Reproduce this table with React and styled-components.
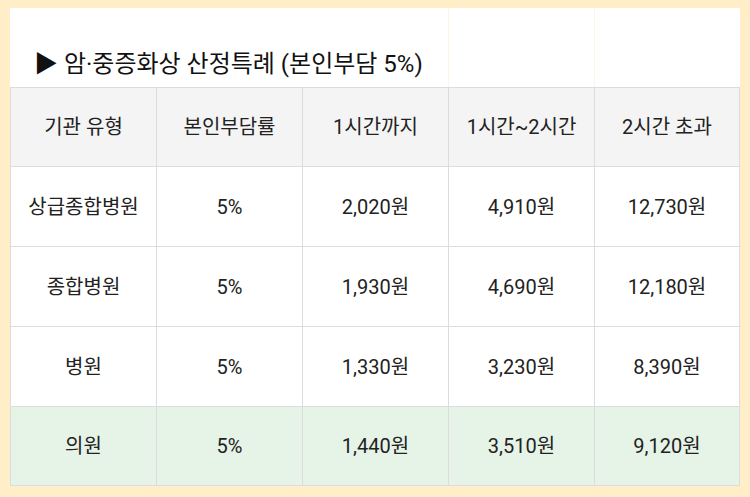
import React from "react";
import styled, { createGlobalStyle } from "styled-components";

const GlobalStyle = createGlobalStyle`
  html, body {
    margin: 0;
    padding: 0;
    background: #ffeec8;
  }
  body {
    font-family: Roboto, "Noto Sans CJK KR", sans-serif;
    color: #222;
  }
`;

const columns = ["기관 유형", "본인부담률", "1시간까지", "1시간~2시간", "2시간 초과"];

const rows = [
  ["상급종합병원", "5%", "2,020원", "4,910원", "12,730원"],
  ["종합병원", "5%", "1,930원", "4,690원", "12,180원"],
  ["병원", "5%", "1,330원", "3,230원", "8,390원"],
  ["의원", "5%", "1,440원", "3,510원", "9,120원", true],
];

const App = () => {
  return (
    <>
      <GlobalStyle />
      <Page>
        <Table>
          <TitleCell>
            <Title>▶ 암·중증화상 산정특례 (본인부담 5%)</Title>
          </TitleCell>
          <BlankCell />
          <BlankCell />
          {columns.map((c) => (
            <Cell key={c} $head>
              {c}
            </Cell>
          ))}
          {rows.map((r, ri) =>
            r.slice(0, 5).map((v, i) => (
              <Cell key={r[0] + i} $green={r[5]} $last={ri === rows.length - 1}>
                {v}
              </Cell>
            ))
          )}
        </Table>
      </Page>
    </>
  );
};

export default App;

const Page = styled.div`
  padding: 8px 10px 12px;
`;

const Table = styled.div`
  width: 730px;
  display: grid;
  grid-template-columns: repeat(5, 146px);
  grid-template-rows: 79px 79px 80px 80px 80px 80px;
`;

const TitleCell = styled.div`
  grid-column: span 3;
  background: #fff;
  display: flex;
  align-items: flex-end;
  padding: 0 0 8px 24px;
  box-sizing: border-box;
  white-space: nowrap;
  position: relative;
  z-index: 1;
`;

const Title = styled.h2`
  margin: 0;
  font-size: 24px;
  line-height: 30px;
  font-weight: 400;
  color: #111;
`;

const BlankCell = styled.div`
  background: #fff;
  border-left: 1px solid #fff6e2;
`;

const Cell = styled.div`
  display: flex;
  align-items: center;
  justify-content: center;
  font-size: 20px;
  line-height: 24px;
  color: #222;
  background: ${(p) => (p.$head ? "#f4f4f4" : p.$green ? "#e6f4e8" : "#fff")};
  border-top: 1px solid #dcdcdc;
  border-left: 1px solid #dcdcdc;
  border-bottom: ${(p) => (p.$last ? "1px solid #dcdcdc" : "none")};
  &:nth-child(5n + 3) {
    border-right: 1px solid #dcdcdc;
  }
`;
